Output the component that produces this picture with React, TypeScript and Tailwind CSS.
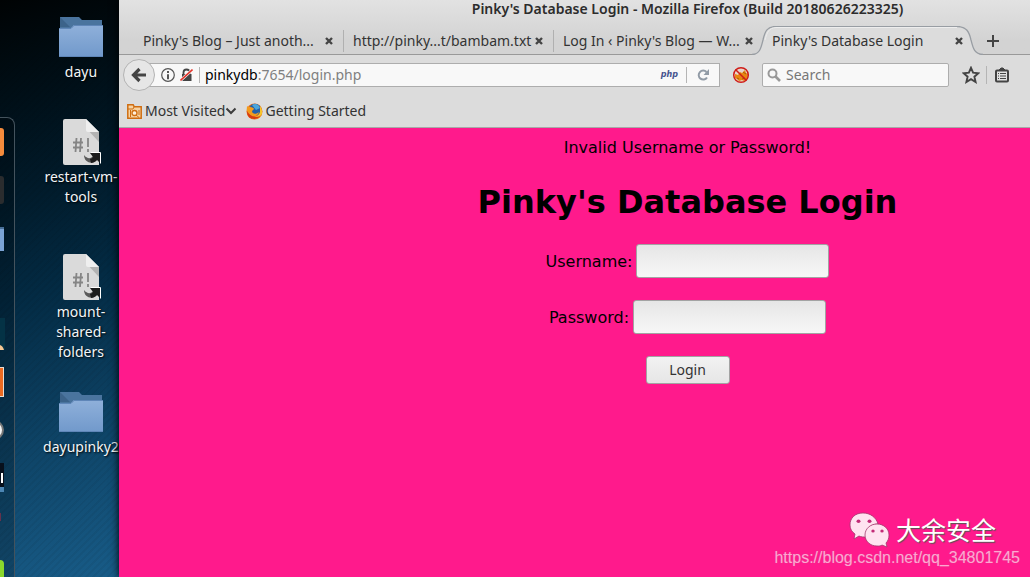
const ui = "font-['Noto_Sans','Open_Sans',sans-serif]";

function Folder() {
  return (
    <svg width="46" height="42" viewBox="0 0 46 42" aria-hidden="true">
      <defs>
        <linearGradient id="folder" x1="0" y1="0" x2="0" y2="1">
          <stop offset="0" stopColor="#8fb0da" />
          <stop offset="1" stopColor="#7199cb" />
        </linearGradient>
      </defs>
      <path d="M2 1h19l3 3h20v8H2z" fill="#4a749e" />
      <path d="M2 1l10 10H2z" fill="#3c638a" />
      <path d="M1 12h12l3-3h29v32H1z" fill="url(#folder)" />
      <path d="M1 12.500h12l3-3h29M1 40.500h44" fill="none" stroke="#5f86b8" />
    </svg>
  );
}

function Script() {
  return (
    <svg className="mb-px" width="46" height="48" viewBox="0 0 46 48" aria-hidden="true">
      <path d="M7 1h21l13 13v33H7a2 2 0 0 1-2-2V3a2 2 0 0 1 2-2z" fill="#dadada" />
      <path d="M28 10l13 14V14z" fill="#b3b3b3" />
      <path d="M28 1l13 13H30a2 2 0 0 1-2-2z" fill="#efefef" />
      <path d="M18.500 20l-1 14M23 20l-1 14M15 24.500h10M15 29.500h10M30 20v9M30 31v3" stroke="#858585" strokeWidth="1.800" fill="none" />
      <path d="M26 37c0 8 9 10 13 5l-4-4c-2 3-6 3-9-1z" fill="#5a5a5a" />
      <path d="M32 35h10v10l-3-3c-2 2-4 3-6 3l-1-4c1 0 2-1 3-2z" fill="#1c1c1c" />
      <path d="M33 34.500h9.500v11" fill="none" stroke="#fff" />
    </svg>
  );
}

function DesktopItem({ kind, lines }: { kind: "folder" | "script"; lines: string[] }) {
  return (
    <button type="button" className="flex w-full flex-col items-center text-sm leading-5 text-[#f2f5f7] [text-shadow:1px_1px_2px_#000]">
      {kind === "folder" ? <Folder /> : <Script />}
      <span className={kind === "folder" ? "mt-1 whitespace-nowrap" : "whitespace-nowrap"}>
        {lines.map((l) => (
          <span key={l} className="block">{l}</span>
        ))}
      </span>
    </button>
  );
}

function Dock() {
  return (
    <nav aria-label="Dock" className="mt-[117px] w-[15px] shrink-0 overflow-hidden rounded-tr-lg border-t border-r border-[#44535d] bg-black/20">
      <svg width="5" height="459" viewBox="0 0 5 459" aria-hidden="true">
        <rect x="-20" y="10" width="24" height="28" rx="3" fill="#f58b3c" />
        <rect x="-20" y="58" width="24" height="28" rx="3" fill="#2a2c2e" />
        <path d="M0 110h4v23H0z" fill="#7ba3d4" />
        <path d="M0 109h4v2H0z" fill="#486f98" />
        <path d="M0 200h5v32H0z" fill="#043245" />
        <path d="M0 227q3 1 4 5H0z" fill="#f7c793" />
        <path d="M0 249h4v30H0z" fill="#e9ddd3" />
        <path d="M0 250h3v28H0z" fill="#ec6a21" />
        <circle cx="-6" cy="312" r="9" fill="#f4f4f4" stroke="#777" strokeWidth="2" />
        <path d="M0 345h4v28H0z" fill="#08101c" />
        <path d="M1 355h2v10H1z" fill="#fff" />
        <path d="M0 369h4v5H0z" fill="#4c86b4" />
        <path d="M0 395h1v8H0z" fill="#65324c" />
        <rect x="-20" y="442" width="24" height="30" rx="4" fill="#8bd82d" />
      </svg>
    </nav>
  );
}

function CloseX() {
  return (
    <svg width="10" height="10" viewBox="0 0 10 10" aria-hidden="true">
      <path d="M2 2l6 6M8 2L2 8" stroke="#444" strokeWidth="2.400" />
    </svg>
  );
}

function Tab({ title }: { title: string }) {
  return (
    <div className="flex h-[22px] w-[210px] shrink-0 items-center justify-between border-r border-[#b0b0b0] px-[9px] nth-3:border-transparent">
      <button type="button" role="tab" aria-selected="false" className="whitespace-nowrap">{title}</button>
      <button type="button" aria-label={"Close " + title}><CloseX /></button>
    </div>
  );
}

function ActiveTab() {
  return (
    <div className="relative -ml-3 flex h-[29px] w-[234px] shrink-0 items-center justify-between pr-[22px] pl-[20px]">
      <svg className="absolute inset-0" width="234" height="29" viewBox="0 0 234 29" aria-hidden="true">
        <path d="M0 29C8 28 9 22 11 14C13 5 15 1 23 0H206C214 1 217 5 219 14C221 22 222 28 231 29z" fill="#dcdcdc" />
        <path d="M0 28.500C8 28 9 22 11 14C13 5 15 1 23 .500H206C214 1 217 5 219 14C221 22 222 28 231 28.500" fill="none" stroke="#989da3" strokeWidth="1.300" />
        <path d="M13 14C15 6 17 2 24 1.500H205" fill="none" stroke="#ededed" />
      </svg>
      <button type="button" role="tab" aria-selected="true" className="relative whitespace-nowrap">Pinky's Database Login</button>
      <button type="button" aria-label="Close Pinky's Database Login" className="relative"><CloseX /></button>
    </div>
  );
}

function UrlBar() {
  return (
    <div className="flex min-w-0 flex-1 items-center">
      <button type="button" aria-label="Back" className="z-10 flex size-8 shrink-0 items-center justify-center rounded-full border border-[#b3b3b3] bg-[#e6e6e6]">
        <svg width="16" height="16" viewBox="0 0 16 16" aria-hidden="true">
          <path d="M8.500 2L2.500 8l6 6M3 8h12" fill="none" stroke="#444" strokeWidth="3.200" />
        </svg>
      </button>
      <div className="-ml-2 flex h-6 min-w-0 flex-1 items-center border border-[#adadad] bg-[#f8f8f8] pl-[13px]">
        <svg className="shrink-0" width="14" height="14" viewBox="0 0 14 14" aria-hidden="true">
          <circle cx="7" cy="7" r="6.300" fill="none" stroke="#555" strokeWidth="1.200" />
          <path d="M7 3v2M7 6.200v5" stroke="#444" strokeWidth="1.800" />
        </svg>
        <svg className="ml-[5px] shrink-0" width="13" height="14" viewBox="0 0 13 14" aria-hidden="true">
          <path d="M3.500 7V4.500a3 3 0 0 1 6 0V7" fill="none" stroke="#444" strokeWidth="1.800" />
          <path d="M2 6h9.500v7H2z" fill="#444" />
          <path d="M0.500 12.500L12.500 1.500" stroke="#f8f8f8" strokeWidth="3" />
          <path d="M0.500 12.500L12.500 1.500" stroke="#e3342b" strokeWidth="1.600" />
        </svg>
        <span className="ml-[6px] h-4 w-px shrink-0 bg-[#b5b5b5]" />
        <a href="#login" className="ml-[5px] flex-1 whitespace-nowrap text-[#808080]"><span className="text-black">pinkydb</span>:7654/login.php</a>
        <span className="mr-[8px] font-['DejaVu_Sans',sans-serif] text-[8px] font-bold text-[#45538e] italic">php</span>
        <span className="h-4 w-px shrink-0 bg-[#b5b5b5]" />
        <button type="button" aria-label="Reload" className="mx-[10px]">
          <svg width="12" height="12" viewBox="0 0 12 12" aria-hidden="true">
            <path d="M9.500 3A4.500 4.500 0 1 0 10 8.500" fill="none" stroke="#919ba6" strokeWidth="2" />
            <path d="M12 0v6H6.500z" fill="#919ba6" />
          </svg>
        </button>
      </div>
    </div>
  );
}

function NoScript() {
  return (
    <svg width="18" height="18" viewBox="0 0 18 18" aria-hidden="true">
      <circle cx="9" cy="9" r="7.500" fill="#e8d5cc" />
      <path d="M3 8l3 1 2-3 2 1 3-3 1 3 2 1-1 5-3 2-2-1-3 1-2-2-2-1z" fill="#e88612" />
      <path d="M5 12l2 1M11 6l3 2M10 13l3-1" stroke="#a95d08" />
      <path d="M3.500 3.500l11 11" stroke="#cf1d19" strokeWidth="1.500" />
      <circle cx="9" cy="9" r="7.300" fill="none" stroke="#cf1d19" strokeWidth="1.500" />
    </svg>
  );
}

function Toolbar() {
  return (
    <div className="flex h-10 items-center pl-1">
      <UrlBar />
      <button type="button" aria-label="Script blocking" className="mx-3"><NoScript /></button>
      <label className="flex h-6 w-[187px] shrink-0 items-center gap-[5px] rounded-xs border border-[#adadad] bg-[#f8f8f8] pl-1">
        <svg width="14" height="14" viewBox="0 0 14 14" className="shrink-0" aria-hidden="true">
          <circle cx="5.500" cy="5.500" r="4" fill="none" stroke="#999" strokeWidth="2" />
          <path d="M8.500 8.500L13 13" stroke="#999" strokeWidth="2.600" />
        </svg>
        <input aria-label="Search" placeholder="Search" className="w-full min-w-0 bg-transparent outline-none placeholder:text-[#777]" />
      </label>
      <button type="button" aria-label="Bookmark" className="ml-[13px]">
        <svg width="18" height="18" viewBox="0 0 18 18" aria-hidden="true">
          <path d="M9 1.800l2.100 4.900 5.300.5-4 3.500 1.200 5.300L9 13.200 4.400 16l1.200-5.300-4-3.500 5.300-.5z" fill="none" stroke="#444" strokeWidth="1.900" />
        </svg>
      </button>
      <span className="mx-[6px] h-[18px] w-px bg-[#b5b5b5]" />
      <button type="button" aria-label="Library" className="mr-5 ml-px">
        <svg width="16" height="16" viewBox="0 0 16 16" aria-hidden="true">
          <path d="M5 3l2-2h2l2 2" fill="#444" stroke="#444" />
          <rect x="2" y="3.500" width="12" height="11" rx="1" fill="#e2e2e2" stroke="#444" strokeWidth="2" />
          <path d="M4 6.500h1M6 6.500h6M4 9h1M6 9h6M4 11.500h1M6 11.500h6" stroke="#444" strokeWidth="1.100" />
        </svg>
      </button>
    </div>
  );
}

function Bookmarks() {
  return (
    <div className="flex h-[33px] items-center border-b border-[#a8a8a8] pl-2">
      <a href="#visited" className="flex items-center whitespace-nowrap">
        <svg width="15" height="15" viewBox="0 0 15 15" className="mr-[3px]" aria-hidden="true">
          <path d="M.8.800h5.400l1 2h7v11.400H.8z" fill="#f7d3a2" stroke="#cf6d11" strokeWidth="1.500" />
          <path d="M1 5h5l1-2" fill="none" stroke="#cf6d11" />
          <circle cx="7.500" cy="9" r="2.500" fill="#fff0dc" stroke="#cf6d11" strokeWidth="1.300" />
          <path d="M9 11l3 2.500M3.500 6v7M12 6v5" stroke="#cf6d11" />
        </svg>
        Most Visited
        <svg width="12" height="8" viewBox="0 0 12 8" aria-hidden="true">
          <path d="M1.500 1.500l4.500 4.500 4.500-4.500" fill="none" stroke="#3c3c3c" strokeWidth="2" />
        </svg>
      </a>
      <a href="#started" className="ml-[9px] flex items-center gap-[2px] whitespace-nowrap">
        <svg width="17" height="17" viewBox="0 0 17 17" aria-hidden="true">
          <circle cx="8.500" cy="8.500" r="8" fill="#e66a16" />
          <circle cx="9" cy="6.800" r="6" fill="#2460a8" />
          <path d="M6 2c3-2 7-1 8 3l-4 2z" fill="#4ba6dc" />
          <path d="M1 3c1 1 2 1 3 1 2 0 4 1 4 2l-2 2c0 3 4 4 7 1-1 5-8 6-11 1-2-3-1-5-1-7z" fill="#f39b1d" />
          <path d="M14 3c3 4 3 9-1 12-3 2-7 1-9-1 5 1 9-1 10-5z" fill="#f6c52c" />
          <path d="M1 8c0 5 3 8 7 8 3 0 5-1 7-4-3 3-10 3-14-4z" fill="#d63a14" />
        </svg>
        Getting Started
      </a>
    </div>
  );
}

const field = "ml-1 h-[34px] w-[193px] rounded-[3px] border border-[#a3a3a3] bg-linear-to-b from-[#e6e6e6] to-[#f7f7f7] px-2 outline-none";

function LoginPage() {
  return (
    <main className="relative flex-1 bg-[#ff1a8c] pt-[10px] pl-[226px] text-center font-['DejaVu_Sans',sans-serif] text-base leading-[19px] text-black">
      <p>Invalid Username or Password!</p>
      <h1 className="mt-[27px] text-[32px] leading-[37px] font-bold">Pinky's Database Login</h1>
      <form className="mt-[23px] flex flex-col items-center gap-[22px]" onSubmit={(e) => e.preventDefault()}>
        <div className="flex items-center">
          <label htmlFor="user">Username:</label>
          <input id="user" type="text" className={field} />
        </div>
        <div className="flex items-center">
          <label htmlFor="pass">Password:</label>
          <input id="pass" type="password" className={field} />
        </div>
        <button type="submit" className="h-7 w-[84px] rounded-[3px] border border-[#a3a3a3] bg-linear-to-b from-[#f2f2f2] to-[#e6e6e6] font-['Noto_Sans','Open_Sans',sans-serif] text-sm text-[#333]">Login</button>
      </form>
      <div className="absolute right-[10px] bottom-[9px] flex flex-col items-end">
        <div className="mr-[24px] flex items-start gap-[5px]">
          <svg width="42" height="36" viewBox="0 0 42 36" aria-hidden="true">
            <path d="M14 1C6 1 1 6 1 13c0 4 2 7 5 9l-1 5 5-3c2 1 5 1 7 1 0-8 5-13 12-13C27 5 21 1 14 1z" fill="#ffe3f0" stroke="#a3396d" strokeWidth=".8" />
            <ellipse cx="9.500" cy="9.300" rx="2" ry="1.800" fill="#c22c77" />
            <ellipse cx="20.500" cy="9.300" rx="2" ry="1.800" fill="#c22c77" />
            <path d="M28 12c-7 0-12 5-12 11s5 11 12 11c2 0 4 0 5-1l5 2-1-4c2-2 3-5 3-8 0-6-5-11-12-11z" fill="#ffe3f0" stroke="#a3396d" strokeWidth=".8" />
            <ellipse cx="24" cy="19" rx="1.700" ry="1.600" fill="#c22c77" />
            <ellipse cx="33" cy="19" rx="1.700" ry="1.600" fill="#c22c77" />
          </svg>
          <span className="font-['Noto_Sans_CJK_SC',sans-serif] text-[25px] leading-[34px] text-white [text-shadow:1px_1px_1px_#555]">大余安全</span>
        </div>
        <a href="#blog" className="font-['Liberation_Sans',sans-serif] text-base leading-[20px] text-[#ffa6d1] [text-shadow:0_0_1px_#d45a96]">https://blog.csdn.net/qq_34801745</a>
      </div>
    </main>
  );
}

export default function App() {
  return (
    <div className={"flex min-h-screen overflow-hidden " + ui}>
      <aside className="flex w-[119px] shrink-0 bg-[repeating-linear-gradient(135deg,transparent_0px,transparent_3px,#0000000c_3px,#0000000c_5px),linear-gradient(163deg,#000304_0%,#001019_18%,#011b2b_33%,#032b44_50%,#0c3f60_70%,#185c88_100%)]">
        <Dock />
        <div className="flex flex-1 flex-col items-center pt-4 pl-7">
          <DesktopItem kind="folder" lines={["dayu"]} />
          <div className="mt-9"><DesktopItem kind="script" lines={["restart-vm-", "tools"]} /></div>
          <div className="mt-[46px]"><DesktopItem kind="script" lines={["mount-", "shared-", "folders"]} /></div>
          <div className="mt-[29px]"><DesktopItem kind="folder" lines={["dayupinky2"]} /></div>
        </div>
      </aside>
      <section aria-label="Browser window" className="z-10 flex min-w-0 flex-1 flex-col bg-[#dcdcdc] text-sm text-[#333] shadow-[0_0_8px_#000]">
        <header className="border-b border-[#999] bg-linear-to-b from-[#e2e2e2] to-[#d3d3d3] to-[40px]">
          <div className="h-[26px] pl-[226px] text-center text-sm leading-[18px] font-semibold whitespace-nowrap text-[#2c2c2c]">Pinky's Database Login - Mozilla Firefox (Build 20180626223325)</div>
          <div role="tablist" className="-mb-px flex items-center pl-[15px]">
            <Tab title="Pinky's Blog – Just anoth..." />
            <Tab title="http://pinky...t/bambam.txt" />
            <Tab title="Log In ‹ Pinky's Blog — W..." />
            <ActiveTab />
            <button type="button" aria-label="New tab">
              <svg width="14" height="14" viewBox="0 0 14 14" aria-hidden="true"><path d="M7 1v12M1 7h12" stroke="#444" strokeWidth="2" /></svg>
            </button>
          </div>
        </header>
        <Toolbar />
        <Bookmarks />
        <LoginPage />
      </section>
    </div>
  );
}
